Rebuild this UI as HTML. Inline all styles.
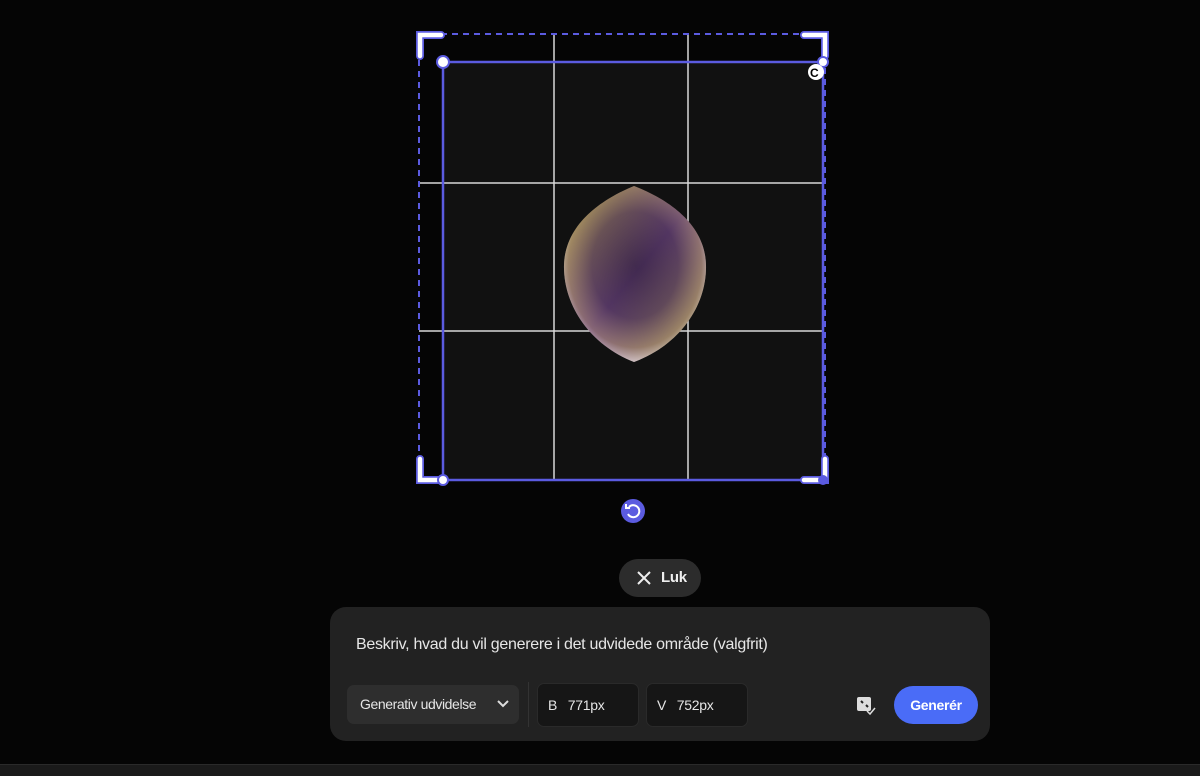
<!DOCTYPE html><html><head><style>
body{margin:0;width:1200px;height:775px;background:#050505;position:relative;overflow:hidden;font-family:"Liberation Sans",sans-serif;}
.a{position:absolute}
</style></head><body>
<div class="a" style="left:443px;top:62px;width:380px;height:418px;background:#111"></div>
<svg class="a" style="left:0;top:0" width="1200" height="775">
<defs><radialGradient id="g" cx="50%" cy="45%" r="55%"><stop offset="0" stop-color="#1e1c24"/><stop offset=".55" stop-color="#3a3040"/><stop offset=".85" stop-color="#8a7a60"/><stop offset="1" stop-color="#e8e8f0"/></radialGradient>
<linearGradient id="h" x1="0" y1="0" x2="1" y2="1"><stop offset="0" stop-color="#d8c840" stop-opacity=".5"/><stop offset=".5" stop-color="#8040a0" stop-opacity=".35"/><stop offset="1" stop-color="#d0c050" stop-opacity=".45"/></linearGradient></defs>
<g stroke="#d8d8d8" stroke-width="1.5"><line x1="554" y1="34" x2="554" y2="480"/><line x1="688" y1="34" x2="688" y2="480"/><line x1="419" y1="183" x2="823" y2="183"/><line x1="419" y1="331" x2="823" y2="331"/></g>
<path d="M634 186 C600 200 565 225 564 265 C563 305 590 345 634 362 C680 345 707 305 706 265 C705 225 670 200 634 186Z" fill="url(#g)"/>
<path d="M634 186 C600 200 565 225 564 265 C563 305 590 345 634 362 C680 345 707 305 706 265 C705 225 670 200 634 186Z" fill="url(#h)"/>
<rect x="419" y="34" width="406" height="446" fill="none" stroke="#5b5be0" stroke-width="2" stroke-dasharray="6 5"/>
<rect x="443" y="62" width="380" height="418" fill="none" stroke="#5b5be0" stroke-width="2.5"/>
<g fill="none" stroke="#5b5be0" stroke-width="8" stroke-linecap="round"><path d="M420 56V35H441"/><path d="M804 35H825V56"/><path d="M420 459V480H441"/><path d="M804 480H825V459"/></g>
<g fill="none" stroke="#fff" stroke-width="4.5" stroke-linecap="round"><path d="M420 56V35H441"/><path d="M804 35H825V56"/><path d="M420 459V480H441"/><path d="M804 480H825V459"/></g>
<circle cx="443" cy="62" r="6" fill="#fff" stroke="#5b5be0" stroke-width="2"/>
<circle cx="823" cy="62" r="5" fill="#fff" stroke="#5b5be0" stroke-width="2"/>
<circle cx="443" cy="480" r="5" fill="#fff" stroke="#5b5be0" stroke-width="2"/>
<circle cx="823" cy="480" r="5" fill="#5b5be0"/>
<circle cx="816" cy="72" r="8" fill="#fff"/><text x="810" y="77" font-size="12" font-weight="bold" font-family="Liberation Sans">C</text>
<circle cx="633" cy="511" r="12" fill="#5b5be0"/>
<path d="M629 507 A6 6 0 1 1 628 514" fill="none" stroke="#fff" stroke-width="2"/><path d="M626 504v4h4" fill="none" stroke="#fff" stroke-width="2"/>
</svg>
<div class="a" style="left:619px;top:559px;width:82px;height:38px;border-radius:19px;background:#2c2c2c;color:#eee;font-size:15px;font-weight:bold;line-height:38px;letter-spacing:-0.3px">
<svg class="a" style="left:18px;top:12px" width="14" height="14"><path d="M1 1L13 13M13 1L1 13" stroke="#eee" stroke-width="2"/></svg><span class="a" style="left:42px">Luk</span></div>
<div class="a" style="left:330px;top:607px;width:660px;height:134px;border-radius:16px;background:#222">
<div class="a" style="left:26px;top:29px;color:#e6e6e6;font-size:16px;letter-spacing:-0.3px">Beskriv, hvad du vil generere i det udvidede område (valgfrit)</div>
<div class="a" style="left:17px;top:78px;width:172px;height:39px;border-radius:7px;background:#2e2e2e;color:#e6e6e6;font-size:14px;line-height:39px;letter-spacing:-0.4px"><span style="margin-left:13px">Generativ udvidelse</span>
<svg class="a" style="left:150px;top:15px" width="12" height="9"><path d="M1 1L6 6L11 1" stroke="#ddd" stroke-width="2" fill="none"/></svg></div>
<div class="a" style="left:198px;top:75px;width:1px;height:45px;background:#333"></div>
<div class="a" style="left:207px;top:76px;width:100px;height:42px;border-radius:7px;background:#161616;border:1px solid #2a2a2a;color:#e6e6e6;font-size:14px;line-height:42px;letter-spacing:-0.3px"><span style="margin-left:10px">B&nbsp;&nbsp;&nbsp;771px</span></div>
<div class="a" style="left:316px;top:76px;width:100px;height:42px;border-radius:7px;background:#161616;border:1px solid #2a2a2a;color:#e6e6e6;font-size:14px;line-height:42px;letter-spacing:-0.3px"><span style="margin-left:10px">V&nbsp;&nbsp;&nbsp;752px</span></div>
<svg class="a" style="left:526px;top:89px" width="20" height="20"><rect x="1" y="1" width="14" height="14" rx="2" fill="#ddd"/><path d="M5 5l2 2M10 9l2 2" stroke="#222" stroke-width="2"/><path d="M11 15l3 3 5-6" stroke="#ddd" stroke-width="1.5" fill="none"/></svg>
<div class="a" style="left:564px;top:79px;width:84px;height:38px;border-radius:19px;background:#4a6cf7;color:#fff;font-size:14px;font-weight:bold;line-height:38px;text-align:center;letter-spacing:-0.3px">Generér</div>
</div>
<div class="a" style="left:0;top:764px;width:1200px;height:11px;background:#1a1a1a;border-top:1px solid #2a2a2a"></div>
</body></html>
